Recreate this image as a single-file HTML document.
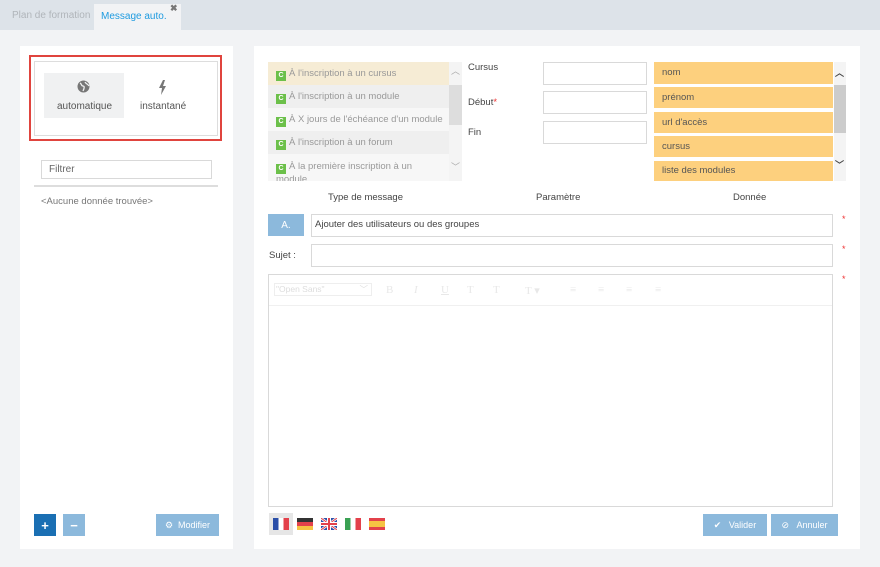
<!DOCTYPE html>
<html><head><meta charset="utf-8"><style>
*{box-sizing:border-box;margin:0;padding:0}
body{width:880px;height:567px;background:#f2f3f5;font-family:"Liberation Sans",sans-serif;font-size:10px;color:#444;position:relative;overflow:hidden}
.a{position:absolute}
.inp{position:absolute;background:#fff;border:1px solid #d9d9d9}
.btn{position:absolute;background:#8cb9dc;color:#fff;display:flex;align-items:center;justify-content:center;font-size:9px}
.li{position:absolute;left:268px;width:181px;height:23px;line-height:23px;color:#999;padding-left:8px;white-space:nowrap;overflow:hidden;font-size:9.5px}
.li b{display:inline-block;width:10px;height:10px;background:#6cc04a;color:#fff;font-size:7px;line-height:10px;text-align:center;margin-right:3px;vertical-align:-1px}
.or{position:absolute;left:654px;width:179px;background:#fdd07e;padding-left:8px;font-size:9.5px;color:#555}
.st{position:absolute;left:842px;color:#e33;font-size:9px}
.tb{position:absolute;top:284px;color:#e8e8e8;font-size:11px;font-family:"Liberation Serif",serif}
</style></head><body>
<div class="a" style="left:0;top:0;width:880px;height:30px;background:#dde3e9"></div>
<div class="a" style="left:12px;top:10px;color:#b0b5ba;font-size:10px">Plan de formation</div>
<div class="a" style="left:94px;top:4px;width:87px;height:26px;background:#f2f3f5"></div>
<div class="a" style="left:101px;top:11px;color:#1e9be0;font-size:10px">Message auto.</div>
<div class="a" style="left:170px;top:3px;color:#777;font-size:9px;font-weight:bold">✖</div>

<div class="a" style="left:20px;top:46px;width:213px;height:503px;background:#fff"></div>
<div class="a" style="left:29px;top:55px;width:193px;height:86px;border:2px solid #e0443e"></div>
<div class="a" style="left:34px;top:61px;width:184px;height:75px;border:1px solid #ddd"></div>
<div class="a" style="left:44px;top:73px;width:80px;height:45px;background:#f0f1f2"></div>
<svg class="a" style="left:77px;top:80px" width="13" height="13" viewBox="0 0 13 13"><circle cx="6.5" cy="6.5" r="6" fill="#777"/><path d="M3 3c2 1 1 3 3 3s1 3 0 5M8 2c1 2 3 2 4 4" stroke="#f0f1f2" stroke-width="1.3" fill="none"/></svg>
<div class="a" style="left:57px;top:101px;font-size:10px;color:#555">automatique</div>
<svg class="a" style="left:158px;top:80px" width="9" height="15" viewBox="0 0 9 15"><path d="M5 0L1 8h3l-1 7 5-9H5l2-6z" fill="#777"/></svg>
<div class="a" style="left:140px;top:101px;font-size:10px;color:#555">instantané</div>
<div class="inp" style="left:41px;top:160px;width:171px;height:19px;padding:3px 7px;color:#666;font-size:10px">Filtrer</div>
<div class="a" style="left:34px;top:185px;width:184px;height:2px;background:#ddd"></div>
<div class="a" style="left:41px;top:196px;color:#777;font-size:9.5px">&lt;Aucune donnée trouvée&gt;</div>
<div class="btn" style="left:34px;top:514px;width:22px;height:22px;background:#1a6fb3;font-size:13px;font-weight:bold">+</div>
<div class="btn" style="left:63px;top:514px;width:22px;height:22px;font-size:13px;font-weight:bold">−</div>
<div class="btn" style="left:156px;top:514px;width:63px;height:22px">⚙&nbsp;&nbsp;Modifier</div>

<div class="a" style="left:254px;top:46px;width:606px;height:503px;background:#fff"></div>
<div class="li" style="top:62px;background:#f6ecd5;line-height:24px">
<b>C</b>À l'inscription à un cursus</div>
<div class="li" style="top:85px;background:#efefef;line-height:24px"><b>C</b>À l'inscription à un module</div>
<div class="li" style="top:108px;background:#f7f7f7;line-height:24px"><b>C</b>À X jours de l'échéance d'un module</div>
<div class="li" style="top:131px;background:#efefef;line-height:24px"><b>C</b>À l'inscription à un forum</div>
<div class="li" style="top:154px;height:27px;background:#f7f7f7;line-height:12px;padding-top:7px"><b>C</b>À la première inscription à un<br>module</div>
<div class="a" style="left:449px;top:62px;width:13px;height:119px;background:#f4f4f4"></div>
<div class="a" style="left:449px;top:85px;width:13px;height:40px;background:#ddd"></div>
<div class="a" style="left:451px;top:64px;color:#aaa;font-size:9px">︿</div>
<div class="a" style="left:451px;top:160px;color:#aaa;font-size:9px">﹀</div>
<div class="a" style="left:468px;top:62px;font-size:9.5px">Cursus</div>
<div class="a" style="left:468px;top:97px;font-size:9.5px">Début<span style="color:#e33">*</span></div>
<div class="a" style="left:468px;top:127px;font-size:9.5px">Fin</div>
<div class="inp" style="left:543px;top:62px;width:104px;height:23px"></div>
<div class="inp" style="left:543px;top:91px;width:104px;height:23px"></div>
<div class="inp" style="left:543px;top:121px;width:104px;height:23px"></div>
<div class="or" style="top:62px;height:22px;line-height:22px">nom</div>
<div class="or" style="top:87px;height:21px;line-height:21px">prénom</div>
<div class="or" style="top:112px;height:21px;line-height:21px">url d'accès</div>
<div class="or" style="top:136px;height:21px;line-height:21px">cursus</div>
<div class="or" style="top:161px;height:20px;line-height:20px">liste des modules</div>
<div class="a" style="left:834px;top:62px;width:12px;height:119px;background:#f4f4f4"></div>
<div class="a" style="left:834px;top:85px;width:12px;height:48px;background:#ccc"></div>
<div class="a" style="left:835px;top:66px;color:#444;font-size:9px;font-weight:bold">︿</div>
<div class="a" style="left:835px;top:158px;color:#444;font-size:9px;font-weight:bold">﹀</div>
<div class="a" style="left:328px;top:192px;font-size:9.5px">Type de message</div>
<div class="a" style="left:536px;top:192px;font-size:9.5px">Paramètre</div>
<div class="a" style="left:733px;top:192px;font-size:9.5px">Donnée</div>
<div class="btn" style="left:268px;top:214px;width:36px;height:22px;font-size:10px">A.</div>
<div class="inp" style="left:311px;top:214px;width:522px;height:23px;padding:4px 3px;font-size:9.5px;color:#444">Ajouter des utilisateurs ou des groupes</div>
<div class="st" style="top:214px">*</div>
<div class="a" style="left:269px;top:250px;font-size:9.5px">Sujet :</div>
<div class="inp" style="left:311px;top:244px;width:522px;height:23px"></div>
<div class="st" style="top:244px">*</div>
<div class="inp" style="left:268px;top:274px;width:565px;height:233px"></div>
<div class="a" style="left:269px;top:305px;width:563px;height:1px;background:#f0f0f0"></div>
<div class="st" style="top:274px">*</div>
<div class="a" style="left:274px;top:283px;width:98px;height:13px;border:1px solid #eee;font-size:8.5px;color:#ddd;padding-left:1px;line-height:11px">"Open Sans"<span style="float:right;padding-right:3px">﹀</span></div>
<div class="tb" style="left:386px">B</div><div class="tb" style="left:414px;font-style:italic">I</div><div class="tb" style="left:441px;text-decoration:underline">U</div><div class="tb" style="left:467px">T</div><div class="tb" style="left:493px">T</div><div class="tb" style="left:525px">T ▾</div><div class="tb" style="left:570px">≡</div><div class="tb" style="left:598px">≡</div><div class="tb" style="left:626px">≡</div><div class="tb" style="left:655px">≡</div>

<div class="a" style="left:269px;top:513px;width:24px;height:22px;background:#e6e6e6"></div>
<div class="a" style="left:273px;top:518px;width:16px;height:12px;background:linear-gradient(90deg,#2b4fa8 33%,#fff 33% 66%,#e3414b 66%)"></div>
<div class="a" style="left:297px;top:518px;width:16px;height:12px;background:linear-gradient(#333 33%,#e3414b 33% 66%,#f6c343 66%)"></div>
<div class="a" style="left:321px;top:518px;width:16px;height:12px;background:#2b4fa8"><svg width="16" height="12"><path d="M0 0L16 12M16 0L0 12" stroke="#fff" stroke-width="2.5"/><path d="M0 0L16 12M16 0L0 12" stroke="#e3414b" stroke-width="1"/><path d="M8 0v12M0 6h16" stroke="#fff" stroke-width="4"/><path d="M8 0v12M0 6h16" stroke="#e3414b" stroke-width="2"/></svg></div>
<div class="a" style="left:345px;top:518px;width:16px;height:12px;background:linear-gradient(90deg,#3aa153 33%,#fff 33% 66%,#e3414b 66%)"></div>
<div class="a" style="left:369px;top:518px;width:16px;height:12px;background:linear-gradient(#e3414b 25%,#f6c343 25% 75%,#e3414b 75%)"></div>
<div class="btn" style="left:703px;top:514px;width:64px;height:22px">✔&nbsp;&nbsp;&nbsp;Valider</div>
<div class="btn" style="left:771px;top:514px;width:67px;height:22px">⊘&nbsp;&nbsp;&nbsp;Annuler</div>
</body></html>
